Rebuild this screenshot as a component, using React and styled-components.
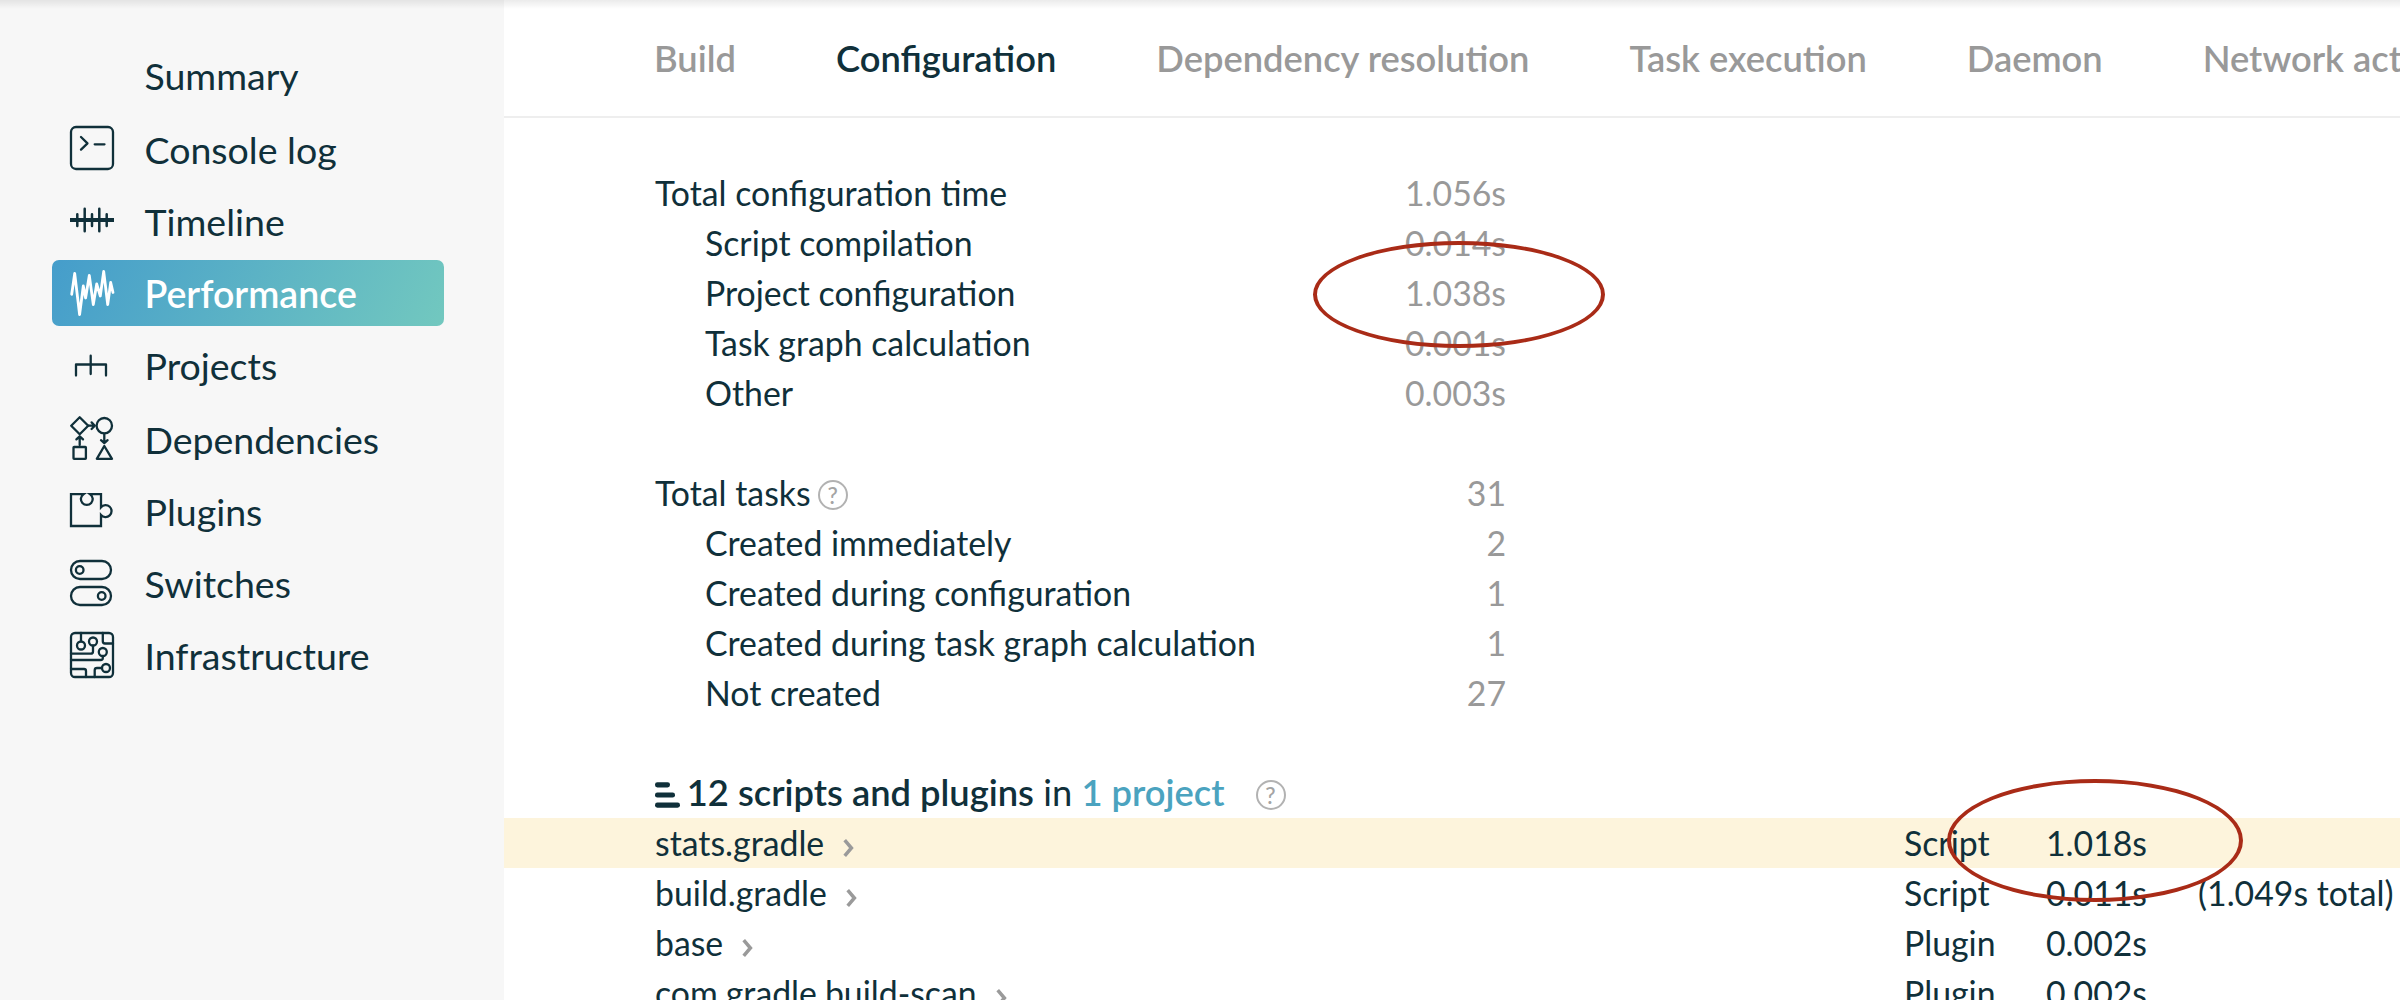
import React from 'react';
import styled, { createGlobalStyle } from 'styled-components';

const ink = '#10303a';
const muted = '#999999';

const GlobalStyle = createGlobalStyle`
  * { box-sizing: border-box; }
  body {
    margin: 0;
    background: #ffffff;
    color: ${ink};
    font-family: Lato, Carlito, "Open Sans", sans-serif;
    overflow: hidden;
  }
`;

const Page = styled.div`
  position: relative;
  display: flex;
  width: 2400px;
  height: 1000px;
  overflow: hidden;
`;

const TopShadow = styled.div`
  position: absolute;
  top: 0;
  left: 0;
  right: 0;
  height: 9px;
  background: linear-gradient(rgba(0, 0, 0, 0.08), rgba(0, 0, 0, 0));
`;

const Sidebar = styled.nav`
  flex: none;
  display: flex;
  flex-direction: column;
  gap: 6px;
  width: 504px;
  padding: 42px 60px 0 52px;
  background: #f7f7f7;
`;

const NavItem = styled.a`
  display: flex;
  align-items: flex-start;
  gap: 30.5px;
  height: 66px;
  padding: 0 18px;
  margin-top: ${(p) => (p.$spaced ? 2 : 0)}px;
  border-radius: 7px;
  color: ${(p) => (p.$active ? '#ffffff' : ink)};
  background: ${(p) => (p.$active ? 'linear-gradient(118deg, #459dcb 0%, #72c8bf 100%)' : 'none')};
  font-size: 37.5px;
  font-weight: ${(p) => (p.$active ? 600 : 400)};
  line-height: 67px;
`;

const NavIcon = styled.svg`
  flex: none;
  width: 44px;
  height: 46px;
  margin-top: 10px;
  overflow: visible;
  fill: none;
  stroke: currentColor;
  stroke-width: 2.3;
  stroke-linecap: round;
  stroke-linejoin: round;
`;

const Main = styled.main`
  flex: 1;
  min-width: 0;
`;

const Tabs = styled.div`
  display: flex;
  gap: 100px;
  height: 118px;
  padding-left: 150px;
  border-bottom: 2px solid #eeeeee;
  overflow: hidden;
`;

const Tab = styled.a`
  flex: none;
  font-size: 36.3px;
  line-height: 116px;
  font-weight: 600;
  white-space: nowrap;
  color: ${(p) => (p.$active ? ink : muted)};
`;

const Stats = styled.section`
  width: 851px;
  margin: 50px 0 0 151px;
`;

const StatRow = styled.div`
  display: flex;
  align-items: center;
  justify-content: space-between;
  height: 50px;
  padding-left: ${(p) => (p.$nested ? 50 : 0)}px;
  font-size: 33.8px;
  line-height: 50px;
`;

const StatLabel = styled.span`
  display: flex;
  align-items: center;
  gap: 7px;
`;

const StatValue = styled.span`
  color: ${muted};
`;

const Help = styled.span`
  display: inline-flex;
  align-items: center;
  justify-content: center;
  width: 30px;
  height: 30px;
  margin-top: ${(p) => p.$drop}px;
  border: 2px solid #b2b2b2;
  border-radius: 50%;
  color: #a4a4a4;
  font-size: 23px;
  line-height: 26px;
  font-weight: 500;
`;

const ListHeading = styled.h2`
  display: flex;
  align-items: center;
  height: 50px;
  margin: 50px 0 0;
  padding: 0 0 2px 151px;
  font-size: 36.3px;
  line-height: 48px;
  font-weight: 400;
`;

const BarsIcon = styled.svg`
  width: 25px;
  height: 26px;
  margin: 5px 6.5px 0 0.3px;
  fill: ${ink};
`;

const HeadingText = styled.span`
  margin-right: 31px;
  white-space: pre;
`;

const Strong = styled.span`
  font-weight: 600;
`;

const ProjectLink = styled.a`
  font-weight: 600;
  color: #4ba3bf;
`;

const ScriptRow = styled.div`
  display: grid;
  grid-template-columns: 1249px 120px 123px 1fr;
  height: 50px;
  padding-left: 151px;
  background: ${(p) => (p.$highlight ? '#fdf4dc' : 'transparent')};
  font-size: 33.8px;
  line-height: 50px;
  white-space: nowrap;
`;

const ScriptName = styled.span`
  display: flex;
  align-items: center;
`;

const Chevron = styled.svg`
  width: 11px;
  height: 18px;
  margin: 10px 0 0 19px;
  fill: none;
  stroke: #9a9a9a;
  stroke-width: 3.5;
`;

const Time = styled.span`
  text-align: right;
`;

const Total = styled.span`
  padding-left: 51px;
`;

const Ring = styled.div`
  position: absolute;
  left: ${(p) => p.$x}px;
  top: ${(p) => p.$y}px;
  width: ${(p) => p.$w}px;
  height: ${(p) => p.$h}px;
  border: 4px solid #a92b17;
  border-radius: 50%;
`;

const icons = {
  console: (
    <>
      <rect x="1" y="1" width="42" height="42" rx="5" />
      <path d="M11 11L17.5 17.3L11 23.6M24.7 18.3H34.5" />
    </>
  ),
  timeline: (
    <>
      <path d="M0 22H44" strokeWidth="4.2" strokeLinecap="butt" />
      <path d="M7.3 16.2V28M14.7 10.8V33.2M22 16.2V28M29.3 10.8V33.2M36.7 16.2V28" strokeWidth="2.5" />
    </>
  ),
  performance: (
    <path
      d="M1.7 24.3L4.7 3.5L9.6 44.5L13.3 16L15.6 28L19.3 5.5L23.3 34.5L26.7 14L30.3 26L33.7 1.5L37.7 34.5L40.7 12.5L43 22.5"
      strokeWidth="2.8"
    />
  ),
  projects: <path d="M20.7 13.7V32M6 33.5V22.5H36V33.5" />,
  dependencies: (
    <>
      <path d="M9.7 1.3L18.2 9.7L9.7 18.2L1.2 9.7Z" />
      <circle cx="34.3" cy="9.7" r="7.7" />
      <rect x="3.5" y="31" width="12.4" height="11.8" rx="0.6" />
      <path d="M34.3 30L42 42.8H26.8Z" />
      <path d="M18.5 9.7H24.8M21.6 6.4L24.8 9.7L21.6 13M9.7 29V20.3M6.4 23.4L9.7 20.3L13 23.4M34.3 18V27M31 24.2L34.3 27L37.6 24.2" />
    </>
  ),
  plugins: (
    <path
      d="M1 6.2H13.4A5.9 5.9 0 1 0 20.2 6.2H31V19.2A6 6 0 1 1 31 27V38H1Z"
      strokeLinejoin="miter"
    />
  ),
  switches: (
    <>
      <rect x="1" y="1" width="40" height="18" rx="9" />
      <circle cx="9.7" cy="10" r="3.8" />
      <rect x="1" y="27" width="40" height="18" rx="9" />
      <circle cx="31.7" cy="36" r="3.8" />
    </>
  ),
  infrastructure: (
    <>
      <rect x="1" y="1" width="42" height="44" rx="4" />
      <circle cx="11" cy="13.5" r="4" />
      <circle cx="23" cy="9.5" r="4" />
      <circle cx="32.8" cy="20" r="4" />
      <circle cx="36" cy="36" r="4" />
      <path d="M11 1V9.3M23 13.7V19.5Q23 21.7 20.8 21.7H1M32.8 24.2V26Q32.8 28 30.6 28H1M32.8 1V9.3Q32.8 11.5 35 11.5H43M1 37H14Q16 37 16 39V45M32 36H27Q24.7 36 24.7 38.3V45" />
    </>
  ),
  summary: null,
};

const navItems = [
  { id: 'summary', label: 'Summary' },
  { id: 'console', label: 'Console log', spaced: true },
  { id: 'timeline', label: 'Timeline' },
  { id: 'performance', label: 'Performance', active: true },
  { id: 'projects', label: 'Projects' },
  { id: 'dependencies', label: 'Dependencies', spaced: true },
  { id: 'plugins', label: 'Plugins' },
  { id: 'switches', label: 'Switches' },
  { id: 'infrastructure', label: 'Infrastructure' },
];

const tabs = ['Build', 'Configuration', 'Dependency resolution', 'Task execution', 'Daemon', 'Network activity'];

const times = [
  ['Total configuration time', '1.056s'],
  ['Script compilation', '0.014s'],
  ['Project configuration', '1.038s'],
  ['Task graph calculation', '0.001s'],
  ['Other', '0.003s'],
];

const tasks = [
  ['Total tasks', '31'],
  ['Created immediately', '2'],
  ['Created during configuration', '1'],
  ['Created during task graph calculation', '1'],
  ['Not created', '27'],
];

const scripts = [
  { name: 'stats.gradle', type: 'Script', time: '1.018s', highlight: true },
  { name: 'build.gradle', type: 'Script', time: '0.011s', total: '(1.049s total)' },
  { name: 'base', type: 'Plugin', time: '0.002s' },
  { name: 'com.gradle.build-scan', type: 'Plugin', time: '0.002s' },
];

function StatGroup({ rows, help }) {
  return (
    <Stats>
      {rows.map(([label, value], i) => (
        <StatRow key={label} $nested={i > 0}>
          <StatLabel>
            {label}
            {help && i === 0 && <Help $drop={4}>?</Help>}
          </StatLabel>
          <StatValue>{value}</StatValue>
        </StatRow>
      ))}
    </Stats>
  );
}

export default function App() {
  return (
    <Page>
      <GlobalStyle />
      <Sidebar>
        {navItems.map((item) => (
          <NavItem key={item.id} $active={item.active} $spaced={item.spaced}>
            <NavIcon viewBox="0 0 44 46">{icons[item.id]}</NavIcon>
            {item.label}
          </NavItem>
        ))}
      </Sidebar>
      <Main>
        <Tabs>
          {tabs.map((tab) => (
            <Tab key={tab} $active={tab === 'Configuration'}>
              {tab}
            </Tab>
          ))}
        </Tabs>
        <StatGroup rows={times} />
        <StatGroup rows={tasks} help />
        <ListHeading>
          <BarsIcon viewBox="0 0 25 26">
            <rect x="0" y="0.2" width="15" height="5.2" rx="2.4" />
            <rect x="0" y="10.4" width="20" height="5.2" rx="2.4" />
            <rect x="0" y="20.5" width="25" height="5.2" rx="2.4" />
          </BarsIcon>
          <HeadingText>
            <Strong>12 scripts and plugins</Strong> in <ProjectLink>1 project</ProjectLink>
          </HeadingText>
          <Help $drop={6}>?</Help>
        </ListHeading>
        {scripts.map((s) => (
          <ScriptRow key={s.name} $highlight={s.highlight}>
            <ScriptName>
              {s.name}
              <Chevron viewBox="0 0 11 18">
                <path d="M1.7 1.2L8.4 9L1.7 16.8" />
              </Chevron>
            </ScriptName>
            <span>{s.type}</span>
            <Time>{s.time}</Time>
            <Total>{s.total}</Total>
          </ScriptRow>
        ))}
      </Main>
      <TopShadow />
      <Ring $x={1313} $y={241} $w={292} $h={107} />
      <Ring $x={1947} $y={779} $w={296} $h={123} />
    </Page>
  );
}
